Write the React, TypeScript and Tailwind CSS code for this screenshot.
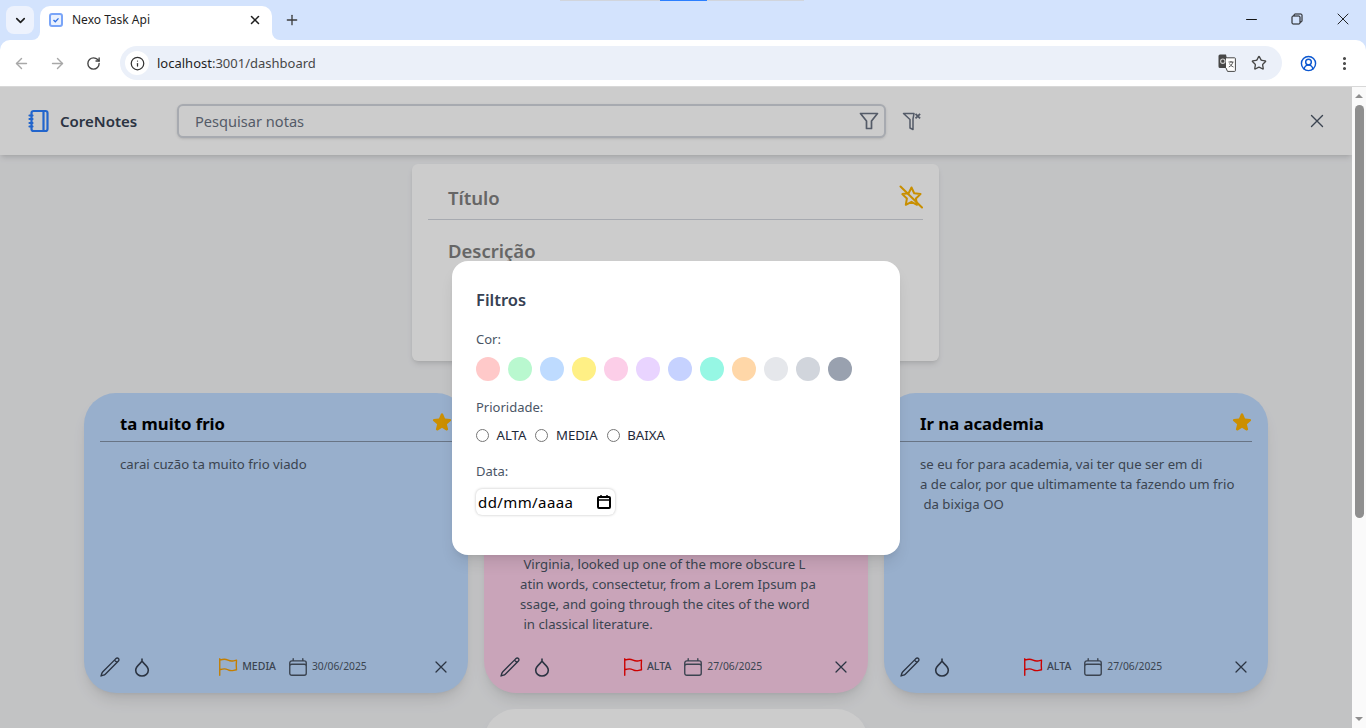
import {
  ArrowLeft,
  ArrowRight,
  ChevronDown,
  CircleUserRound,
  EllipsisVertical,
  Info,
  Minus,
  Plus,
  RotateCw,
  Star,
  X,
} from "lucide-react";
import {
  HiOutlineCalendar,
  HiOutlineFlag,
  HiOutlinePencil,
  HiOutlineXMark,
  HiStar,
} from "react-icons/hi2";

type Note = {
  id: number;
  title: string;
  lines: string[];
  bg: string;
  bodyTop: string;
  flag: string;
  priority: string;
  date: string;
};

// the middle card sits under the modal, only its last lines show
const notes: Note[] = [
  {
    id: 1,
    title: "ta muito frio",
    lines: ["carai cuzão ta muito frio viado"],
    bg: "bg-blue-200",
    bodyTop: "pt-[12px]",
    flag: "text-[#f59e00]",
    priority: "MEDIA",
    date: "30/06/2025",
  },
  {
    id: 2,
    title: "",
    lines: [
      " Virginia, looked up one of the more obscure L",
      "atin words, consectetur, from a Lorem Ipsum pa",
      "ssage, and going through the cites of the word",
      " in classical literature.",
    ],
    bg: "bg-pink-200",
    bodyTop: "pt-[112px]",
    flag: "text-[#ff0000]",
    priority: "ALTA",
    date: "27/06/2025",
  },
  {
    id: 3,
    title: "Ir na academia",
    lines: [
      "se eu for para academia, vai ter que ser em di",
      "a de calor, por que ultimamente ta fazendo um frio",
      " da bixiga OO",
    ],
    bg: "bg-blue-200",
    bodyTop: "pt-[12px]",
    flag: "text-[#ff0000]",
    priority: "ALTA",
    date: "27/06/2025",
  },
];

const swatches = [
  "bg-red-200",
  "bg-green-200",
  "bg-blue-200",
  "bg-yellow-200",
  "bg-pink-200",
  "bg-purple-200",
  "bg-indigo-200",
  "bg-teal-200",
  "bg-orange-200",
  "bg-gray-200",
  "bg-gray-300",
  "bg-gray-400",
];

function NotebookIcon() {
  return (
    <svg width="24" height="24" viewBox="0 0 24 24" fill="none" stroke="currentColor" strokeWidth="2.2" strokeLinecap="round" strokeLinejoin="round" className="text-blue-500">
      <rect x="4.5" y="2" width="16" height="20" rx="2" />
      <path d="M16.5 2v20M2.5 6.5h3M2.5 10h3M2.5 14h3M2.5 17.5h3" />
    </svg>
  );
}

function FunnelIcon() {
  return (
    <svg width="20" height="20" viewBox="0 0 20 20" fill="none" stroke="currentColor" strokeWidth="1.7" strokeLinejoin="round">
      <path d="M1.5 2.5h17l-6 7.5v7.5h-5V10z" />
    </svg>
  );
}

function FunnelXIcon() {
  return (
    <svg width="20" height="20" viewBox="0 0 20 20" fill="none" stroke="currentColor" strokeWidth="1.5" strokeLinejoin="round">
      <path d="M1.5 2.5h10.5l-1 5.5v10.5l-3-1.5V8.5z" />
      <path d="M13.5 2.8l4.6 4.6M18.1 2.8l-4.6 4.6" strokeWidth="1.8" />
    </svg>
  );
}

function StarOffIcon() {
  return (
    <svg width="24" height="24" viewBox="0 0 24 24" fill="none" stroke="currentColor" strokeWidth="2" strokeLinejoin="round" strokeLinecap="round" className="text-[#fbb300]">
      <path d="M12.5 2.5l2.7 5.7 6.3.9-4.6 4.4 1.1 6.3-5.5-3-5.7 3 1.1-6.3-4.6-4.4 6.3-.9z" />
      <path d="M1.5 1.5l21.5 21" />
    </svg>
  );
}

function DropIcon() {
  return (
    <svg width="18" height="20" viewBox="0 0 18 20" fill="none" stroke="currentColor" strokeWidth="1.6" strokeLinejoin="round">
      <path d="M9 1.5v2.7c1.2 2.2 6.3 4.6 6.3 9a6.3 5.8 0 0 1-12.6 0c0-4.4 5.1-6.8 6.3-9" />
    </svg>
  );
}

function TranslateIcon() {
  return (
    <svg width="18" height="18" viewBox="0 0 18 18">
      <path d="M.5 2A1.5 1.5 0 0 1 2 .5h6L11 14H2a1.5 1.5 0 0 1-1.5-1.5z" fill="#474747" />
      <path d="M8 3.8h8.6a.8.8 0 0 1 .8.8v12a.8.8 0 0 1-.8.8H9.5L8 14" fill="#fff" stroke="#474747" strokeWidth="1" />
      <circle cx="4.8" cy="7.2" r="2.2" fill="none" stroke="#d0d0d0" strokeWidth="1.1" />
      <path d="M10.5 8h5M13 7v1.5M14.8 8c-.5 2.5-2 4-4 5M11.5 9.5c.7 1.5 2 2.7 4 3.5" fill="none" stroke="#474747" strokeWidth=".9" />
    </svg>
  );
}

function RestoreIcon() {
  return (
    <svg width="12" height="12" viewBox="0 0 12 12" fill="none" stroke="#111" strokeWidth="1">
      <rect x="1" y="3" width="8" height="8" rx="1" />
      <path d="M3 3V2a1 1 0 0 1 1-1h6a1 1 0 0 1 1 1v6a1 1 0 0 1-1 1H9" />
    </svg>
  );
}

function FaviconIcon() {
  return (
    <svg width="14" height="14" viewBox="0 0 14 14" fill="none">
      <rect x="1" y="1" width="12" height="12" rx="2" fill="#eaf1fe" stroke="#7aa5f8" strokeWidth="2" />
      <path d="M4.5 7l1.8 1.8 3.2-3.4" stroke="#2f6fe4" strokeWidth="1.3" />
    </svg>
  );
}

function BrowserChrome() {
  return (
    <header className="relative shrink-0 bg-[#d3e3fd] font-['Noto_Sans',sans-serif]">
      <div className="absolute left-[560px] top-0 flex h-px w-[244px] bg-gray-300">
        <span className="ml-[100px] w-[47px] bg-blue-500" />
      </div>
      <div className="flex h-10 items-end">
        <button className="mb-[6px] ml-[6px] flex h-7 w-7 items-center justify-center rounded-lg bg-[#edf2fd] text-[#1f1f1f]">
          <ChevronDown size={15} strokeWidth={2.6} />
        </button>
        <div className="relative ml-[6px] flex h-[34px] w-[232px] items-center rounded-t-[10px] bg-white pb-[6px] pl-[9px] pr-[10px]">
          <FaviconIcon />
          <span className="ml-[9px] text-xs text-[#1f1f1f]">Nexo Task Api</span>
          <X size={14} strokeWidth={2.6} className="ml-auto text-[#1f1f1f]" />
          <span className="absolute -right-2 bottom-0 h-2 w-2 bg-white">
            <span className="block h-2 w-2 rounded-bl-lg bg-[#d3e3fd]" />
          </span>
          <span className="absolute -left-2 bottom-0 h-2 w-2 bg-white">
            <span className="block h-2 w-2 rounded-br-lg bg-[#d3e3fd]" />
          </span>
        </div>
        <Plus size={16} strokeWidth={2} className="mb-[12px] ml-[12px] text-[#3c3c3c]" />
        <div className="mb-[11px] ml-auto flex items-center text-[#111]">
          <Minus size={17} strokeWidth={1.4} className="mr-[31px]" />
          <span className="mr-[30px]">
            <RestoreIcon />
          </span>
          <X size={20} strokeWidth={1.1} className="mr-[13px]" />
        </div>
      </div>
      <div className="flex h-[47px] items-center rounded-t-[10px] border-b border-[#d8d8d8] bg-white pl-[13px] pr-[12px]">
        <ArrowLeft size={17} className="text-[#a8a8a8]" />
        <ArrowRight size={17} className="ml-[19px] text-[#a8a8a8]" />
        <RotateCw size={15} strokeWidth={2.2} className="ml-[20px] text-[#454545]" />
        <div className="ml-[19px] flex h-[34px] w-[1162px] items-center rounded-full bg-[#ebf0f9] pl-[5px] pr-[15px]">
          <span className="flex h-[24px] w-[24px] items-center justify-center rounded-full bg-white">
            <Info size={15} strokeWidth={2} className="text-[#333]" />
          </span>
          <span className="ml-[8px] pt-[2px] text-[13px] text-[#1f1f1f]">
            localhost<span className="text-[#474747]">:3001/dashboard</span>
          </span>
          <span className="ml-auto">
            <TranslateIcon />
          </span>
          <Star size={16} strokeWidth={2} className="ml-[15px] text-[#474747]" />
        </div>
        <CircleUserRound size={17} strokeWidth={2} className="ml-[18px] text-[#0b57d0]" />
        <EllipsisVertical size={17} strokeWidth={2.4} className="ml-[19px] text-[#474747]" />
      </div>
    </header>
  );
}

function NoteCard({ note }: { note: Note }) {
  return (
    <article className={`flex h-[300px] flex-col rounded-[32px] px-4 pb-[14px] pt-4 shadow-lg ${note.bg}`}>
      <div className="flex h-[33px] shrink-0 items-start justify-between border-b border-gray-500/70 pl-5">
        <h2 className="text-[16.7px] leading-[30px] font-bold text-black">{note.title}</h2>
        <HiStar size={22} className="ml-auto mt-[2px] translate-x-[1px] text-[#ffb300]" />
      </div>
      <div className={`flex-1 overflow-hidden pl-5 text-[13.2px] leading-5 text-gray-600 ${note.bodyTop}`}>
        {note.lines.map((line) => (
          <p key={line} className="whitespace-pre">
            {line}
          </p>
        ))}
      </div>
      <footer className="flex h-6 shrink-0 items-center text-gray-700">
        <HiOutlinePencil size={22} className="-ml-[1px]" />
        <span className="ml-[12px]">
          <DropIcon />
        </span>
        <div className="flex flex-1 items-center justify-center pl-[2px]">
          <HiOutlineFlag size={22} className={note.flag} />
          <span className="ml-[3px] text-[10.5px] font-medium text-gray-600">{note.priority}</span>
          <HiOutlineCalendar size={22} className="ml-[11px] text-gray-600" />
          <span className="ml-[3px] text-[10.3px] text-gray-600">{note.date}</span>
        </div>
        <HiOutlineXMark size={20} className="mr-[1px]" />
      </footer>
    </article>
  );
}

function FiltersModal() {
  return (
    <div className="absolute inset-0 flex items-center justify-center bg-black/20">
      <div className="mt-[1px] h-[294px] w-[448px] rounded-2xl bg-white p-6 shadow-lg">
        <h3 className="text-[16.5px] leading-[30px] font-semibold text-gray-700">Filtros</h3>
        <p className="mt-[14px] text-[13px] leading-5 text-gray-600">Cor:</p>
        <div className="mt-2 flex gap-2">
          {swatches.map((swatch) => (
            <span key={swatch} className={`h-6 w-6 rounded-full ${swatch}`} />
          ))}
        </div>
        <p className="mt-4 text-[13px] leading-5 text-gray-600">Prioridade:</p>
        <div className="mt-[8px] flex items-center text-[13.2px] leading-5 text-gray-800">
          {["ALTA", "MEDIA", "BAIXA"].map((label) => (
            <label key={label} className="mr-[9px] flex items-center">
              <input type="radio" name="priority" className="m-0 h-[13px] w-[13px]" />
              <span className="ml-[7.5px]">{label}</span>
            </label>
          ))}
        </div>
        <p className="mt-[16px] text-[13px] leading-5 text-gray-600">Data:</p>
        <div className="mt-2 flex h-[26px] w-[139px] items-center justify-between rounded-md pl-[2px] pr-[3px] shadow-[0_0_3px_rgba(0,0,0,0.25)]">
          <span className="text-[15px] tracking-[0.4px] text-black">dd/mm/aaaa</span>
          <svg width="16" height="16" viewBox="0 0 16 16" fill="none" stroke="#000" strokeWidth="2">
            <rect x="2" y="3" width="12" height="11" rx="1" />
            <path d="M2 6h12M5 1v2M11 1v2" strokeWidth="1.5" />
          </svg>
        </div>
      </div>
    </div>
  );
}

function Scrollbar() {
  return (
    <div className="flex w-[14px] shrink-0 flex-col items-center bg-[#fafafa]">
      <span className="mt-[7px] h-0 w-0 border-x-[4px] border-b-[4px] border-x-transparent border-b-[#8f8f8f]" />
      <span className="mt-[7px] h-[413px] w-[9px] rounded-full bg-[#8f8f8f]" />
      <span className="mb-[7px] mt-auto h-0 w-0 border-x-[4px] border-t-[4px] border-x-transparent border-t-[#8f8f8f]" />
    </div>
  );
}

export default function App() {
  return (
    <div className="flex h-[728px] flex-col overflow-hidden font-['Noto_Sans',sans-serif]">
      <BrowserChrome />
      <div className="flex min-h-0 flex-1">
        <main className="relative flex-1 overflow-hidden bg-gray-100">
          <div className="flex h-[68px] items-center bg-white pl-[27px] pr-6 shadow-md">
            <NotebookIcon />
            <span className="ml-[9px] w-[118px] text-[15px] font-semibold text-gray-700">CoreNotes</span>
            <div className="-ml-[1px] flex h-[34px] w-[709px] items-center justify-between rounded-md border-2 border-gray-300 bg-white pl-[16px] pr-[5px] shadow-sm">
              <span className="pt-[2px] text-[14.6px] text-gray-500">Pesquisar notas</span>
              <span className="text-gray-500">
                <FunnelIcon />
              </span>
            </div>
            <span className="ml-[16px] text-gray-500">
              <FunnelXIcon />
            </span>
            <HiOutlineXMark size={22} className="ml-auto text-gray-600" />
          </div>

          <div className="ml-[412px] mt-[9px] h-[197px] w-[527px] rounded-md bg-white px-4 pt-[14px] shadow-md">
            <div className="flex h-[42px] items-start justify-between border-b border-gray-300 pl-5">
              <span className="text-[18.5px] leading-[40px] font-semibold text-[#808080]">Título</span>
              <span className="mt-[7px]">
                <StarOffIcon />
              </span>
            </div>
            <p className="mt-[15px] pl-5 text-[18.5px] leading-8 font-semibold text-[#808080]">Descrição</p>
          </div>

          <div className="mx-auto mt-8 grid w-[1184px] grid-cols-3 gap-4">
            {notes.map((note) => (
              <NoteCard key={note.id} note={note} />
            ))}
            <div className="col-start-2 h-[300px] rounded-[32px] bg-white shadow-lg" />
          </div>

          <FiltersModal />
        </main>
        <Scrollbar />
      </div>
    </div>
  );
}
